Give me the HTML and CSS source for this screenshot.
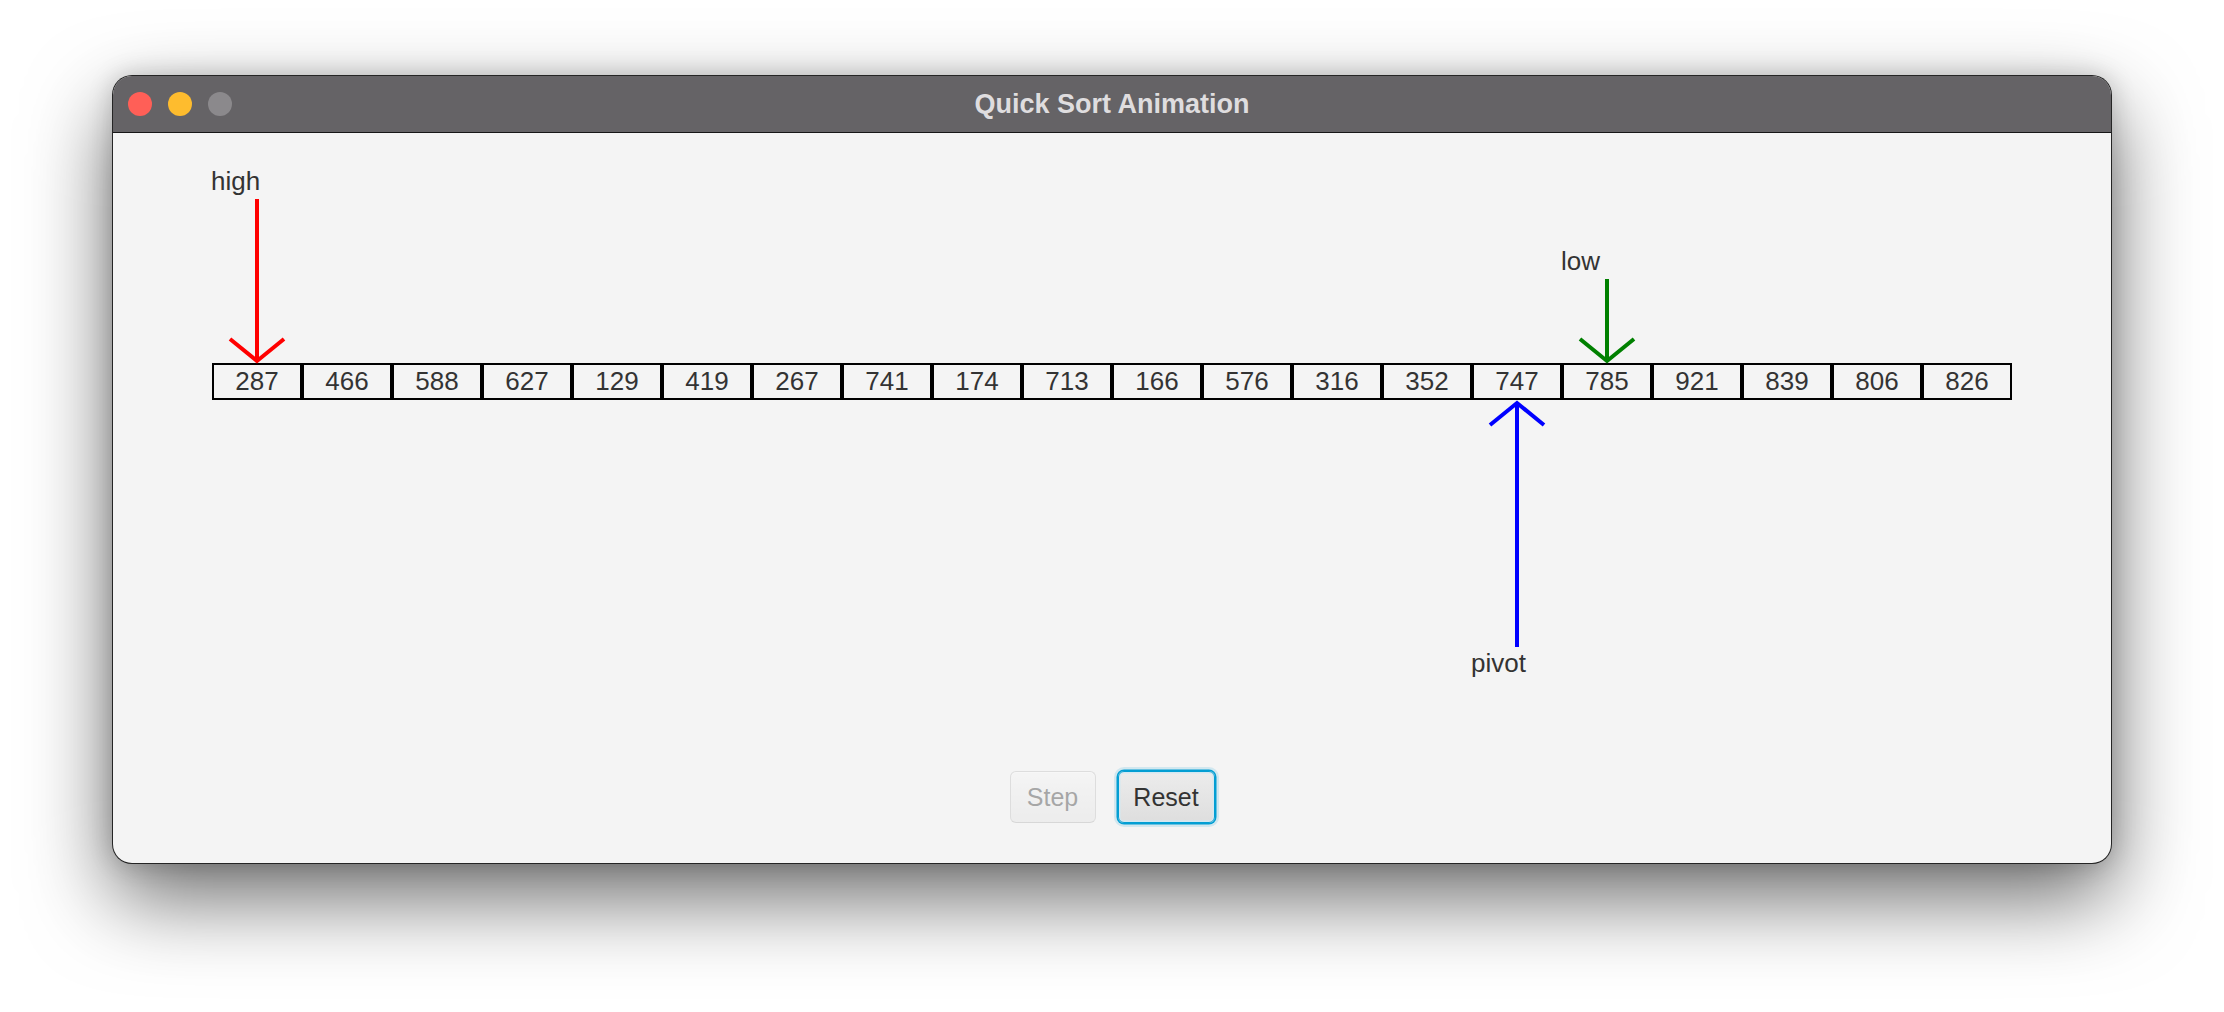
FILE: index.html
```html
<!DOCTYPE html>
<html lang="en">
<head>
<meta charset="utf-8">
<title>Quick Sort Animation</title>
<link rel="stylesheet" href="styles.css">
</head>
<body>
<div class="desk">
  <div class="window">
    <div class="titlebar">
      <div class="lights">
        <span class="light light-close"></span>
        <span class="light light-min"></span>
        <span class="light light-max"></span>
      </div>
      <div class="title">Quick Sort Animation</div>
      <div class="spacer"></div>
    </div>
    <div class="content">
      <div class="stage">
        <div class="array">
          <div class="cell">287
            <div class="marker marker-up">
              <span class="marker-label">high</span>
              <svg class="arrow arrow-red" width="60" height="166" viewBox="0 0 60 166"><path d="M30 2V164M3 142L30 164L57 142"/></svg>
            </div>
          </div>
          <div class="cell">466</div>
          <div class="cell">588</div>
          <div class="cell">627</div>
          <div class="cell">129</div>
          <div class="cell">419</div>
          <div class="cell">267</div>
          <div class="cell">741</div>
          <div class="cell">174</div>
          <div class="cell">713</div>
          <div class="cell">166</div>
          <div class="cell">576</div>
          <div class="cell">316</div>
          <div class="cell">352</div>
          <div class="cell">747
            <div class="marker marker-down">
              <svg class="arrow arrow-blue" width="60" height="247" viewBox="0 0 60 247"><path d="M30 247V3M3 25L30 3L57 25"/></svg>
              <span class="marker-label marker-label-below">pivot</span>
            </div>
          </div>
          <div class="cell">785
            <div class="marker marker-up">
              <span class="marker-label">low</span>
              <svg class="arrow arrow-green" width="60" height="86" viewBox="0 0 60 86"><path d="M30 2V84M3 62L30 84L57 62"/></svg>
            </div>
          </div>
          <div class="cell">921</div>
          <div class="cell">839</div>
          <div class="cell">806</div>
          <div class="cell">826</div>
        </div>
      </div>
      <div class="controls">
        <button class="btn btn-step" disabled>Step</button>
        <button class="btn btn-reset">Reset</button>
      </div>
    </div>
  </div>
</div>
</body>
</html>
```
FILE: styles.css
```css
html, body {
  margin: 0;
  padding: 0;
  background: #ffffff;
}

body {
  font-family: "Liberation Sans", Arial, Helvetica, sans-serif;
}

.desk {
  width: 2224px;
  height: 1012px;
  box-sizing: border-box;
  padding: 75px 0 0 112px;
  overflow: hidden;
}

.window {
  width: 2000px;
  height: 789px;
  box-sizing: border-box;
  border: 1px solid rgba(0, 0, 0, 0.85);
  border-radius: 20px;
  overflow: hidden;
  background: #f4f4f4;
  display: flex;
  flex-direction: column;
  box-shadow: 0 34px 84px rgba(0, 0, 0, 0.58), 0 0 24px rgba(0, 0, 0, 0.18);
}

.titlebar {
  height: 57px;
  flex: none;
  box-sizing: border-box;
  background: #656366;
  border-bottom: 1px solid #161616;
  display: grid;
  grid-template-columns: 1fr auto 1fr;
  align-items: center;
}

.lights {
  display: flex;
  gap: 16px;
  padding-left: 15px;
}

.light {
  width: 24px;
  height: 24px;
  border-radius: 50%;
  display: block;
}

.light-close { background: #ff5f57; }
.light-min { background: #febc2e; }
.light-max { background: #8b898c; }

.title {
  font-size: 27px;
  font-weight: bold;
  color: #dfdddf;
  white-space: nowrap;
}

.content {
  flex: 1;
  display: flex;
  flex-direction: column;
}

.stage {
  padding: 230px 0 0 99px;
}

.array {
  display: flex;
}

.cell {
  position: relative;
  width: 90px;
  height: 37px;
  box-sizing: border-box;
  border: 2px solid #000000;
  display: flex;
  align-items: center;
  justify-content: center;
  font-size: 26px;
  color: #333333;
}

.marker {
  position: absolute;
  left: -3px;
  display: flex;
  flex-direction: column;
  align-items: flex-start;
}

.marker-up {
  bottom: calc(100% + 2px);
}

.marker-down {
  top: calc(100% + 2px);
}

.marker-label {
  font-size: 26px;
  line-height: 26px;
  color: #333333;
  white-space: nowrap;
  margin-bottom: 3px;
}

.marker-label-below {
  margin-bottom: 0;
  margin-top: 3px;
}

.arrow {
  display: block;
  margin-left: 16px;
  overflow: visible;
}

.arrow path {
  fill: none;
  stroke-width: 4;
  stroke-linecap: butt;
  stroke-linejoin: miter;
}

.arrow-red path { stroke: #ff0000; }
.arrow-green path { stroke: #008000; }
.arrow-blue path { stroke: #0000ff; }

.controls {
  margin-top: auto;
  padding-bottom: 40px;
  display: flex;
  justify-content: center;
  gap: 22px;
}

.btn {
  height: 52px;
  box-sizing: border-box;
  padding: 0;
  border: 1px solid #bdbdbd;
  border-bottom-color: #aeaeae;
  border-radius: 6px;
  background: linear-gradient(to bottom, #f6f6f6, #e2e2e2);
  box-shadow: inset 0 1px 0 rgba(255, 255, 255, 0.7);
  font-family: "Liberation Sans", Arial, Helvetica, sans-serif;
  font-size: 25px;
  color: #333333;
}

.btn-step {
  width: 86px;
  opacity: 0.4;
}

.btn-reset {
  width: 97px;
  border-color: #039ed3;
  background: linear-gradient(to bottom, #ececec, #dedede);
  box-shadow: 0 0 0 1.5px #039ed3, 0 0 0 4px rgba(3, 158, 211, 0.14), inset 0 0 0 1.5px #d3e8f1;
}
```
